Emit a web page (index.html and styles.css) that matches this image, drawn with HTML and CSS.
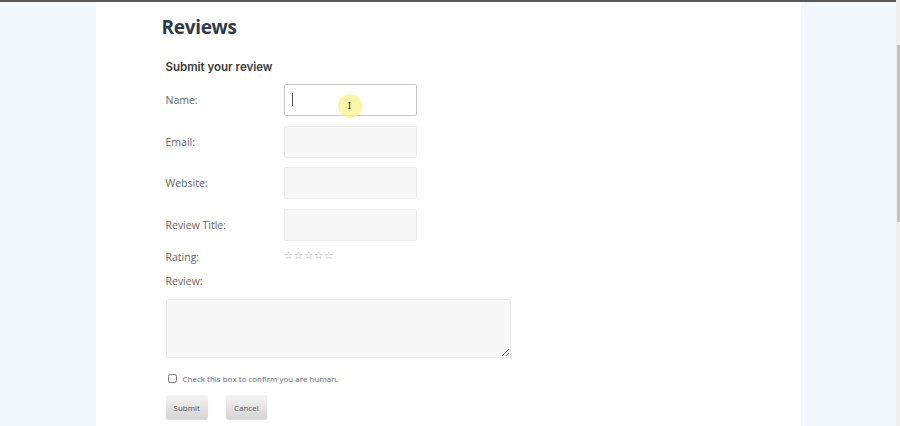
FILE: index.html
```html
<!DOCTYPE html>
<html lang="en">
<head>
    <meta charset="UTF-8">
    <meta name="viewport" content="width=device-width, initial-scale=1.0">
    <title>Reviews</title>
    <link rel="stylesheet" href="styles.css">
</head>
<body>
    <div class="window">
        <div class="page">
            <div class="column">
                <h1>Reviews</h1>
                <form class="review-form">
                    <h2>Submit your review</h2>
                    <div class="field-row">
                        <label for="name">Name:</label>
                        <div class="input-wrap">
                            <input type="text" id="name" class="focused">
                            <span class="caret"></span>
                            <span class="pointer">I</span>
                        </div>
                    </div>
                    <div class="field-row">
                        <label for="email">Email:</label>
                        <input type="text" id="email">
                    </div>
                    <div class="field-row">
                        <label for="website">Website:</label>
                        <input type="text" id="website">
                    </div>
                    <div class="field-row">
                        <label for="title">Review Title:</label>
                        <input type="text" id="title">
                    </div>
                    <div class="rating-row">
                        <label>Rating:</label>
                        <span class="stars">&#9734;&#9734;&#9734;&#9734;&#9734;</span>
                    </div>
                    <label for="review" class="review-label">Review:</label>
                    <textarea id="review"></textarea>
                    <div class="check-row">
                        <input type="checkbox" id="human">
                        <label for="human">Check this box to confirm you are human.</label>
                    </div>
                    <div class="buttons">
                        <button type="button">Submit</button>
                        <button type="button">Cancel</button>
                    </div>
                </form>
            </div>
        </div>
        <div class="scrollbar"><div class="thumb"></div></div>
    </div>
</body>
</html>
```

FILE: styles.css
```css
:root {
    --page-bg: #f3f7fe;
    --heading: #2f3a4b;
    --label: #666666;
    --field-bg: #f7f7f7;
    --field-border: #ececec;
}

body {
    margin: 0;
    padding: 0;
    font-family: "Open Sans", Arial, sans-serif;
    background-color: var(--page-bg);
    overflow: hidden;
}

.window {
    display: flex;
    height: 426px;
}

.page {
    flex: 1;
    border-top: 2px solid #5a5a5a;
    box-sizing: border-box;
}

.column {
    width: 705px;
    height: 100%;
    margin: 0 auto;
    background-color: #ffffff;
    padding: 12px 0 0 66px;
    box-sizing: border-box;
}

h1 {
    margin: 0;
    font-family: "Open Sans", Arial, sans-serif;
    font-size: 19px;
    font-weight: 700;
    color: var(--heading);
    letter-spacing: -0.3px;
}

.review-form {
    padding-left: 4px;
}

h2 {
    margin: 20px 0 10px;
    font-family: Inter, "Open Sans", sans-serif;
    font-size: 11.5px;
    font-weight: 600;
    color: #3a3a3a;
}

label {
    font-size: 10.5px;
    color: var(--label);
}

.field-row {
    display: flex;
    align-items: center;
    height: 32px;
    margin-bottom: 9.5px;
}

.field-row label {
    width: 118px;
}

input[type="text"] {
    width: 133px;
    height: 32px;
    box-sizing: border-box;
    border: 1px solid var(--field-border);
    background-color: var(--field-bg);
    border-radius: 2px;
    margin: 0;
    outline: none;
}

input.focused {
    background-color: #ffffff;
    border-color: #c9c9c9;
}

.input-wrap {
    position: relative;
}

.caret {
    position: absolute;
    left: 8px;
    top: 9px;
    width: 1px;
    height: 13px;
    background-color: #555555;
}

.pointer {
    position: absolute;
    left: 54px;
    top: 10px;
    width: 24px;
    height: 24px;
    border-radius: 50%;
    background-color: rgba(250, 240, 110, 0.6);
    font-family: "DejaVu Serif", serif;
    font-size: 10px;
    color: #444444;
    text-align: center;
    line-height: 24px;
}

.rating-row {
    display: flex;
    align-items: center;
    margin-top: -4px;
    height: 18px;
}

.rating-row label {
    width: 118px;
    padding-top: 3px;
}

.stars {
    font-family: "DejaVu Sans", sans-serif;
    font-size: 11px;
    color: #b5b5b5;
    letter-spacing: 0.2px;
    margin-top: 0;
}

.review-label {
    display: block;
    margin-top: 10px;
}

textarea {
    display: block;
    width: 345px;
    height: 59px;
    margin-top: 11px;
    box-sizing: border-box;
    border: 1px solid var(--field-border);
    background-color: var(--field-bg);
    border-radius: 2px;
}

.check-row {
    display: flex;
    align-items: center;
    margin-top: 15px;
    padding-left: 2px;
}

.check-row input {
    width: 9px;
    height: 9px;
    margin: 0 6px 0 0;
}

.check-row label {
    font-size: 8px;
    color: #666666;
}

.buttons {
    display: flex;
    gap: 18px;
    margin-top: 11px;
}

button {
    height: 24px;
    padding: 0 8px;
    font-family: "Open Sans", Arial, sans-serif;
    font-size: 8px;
    color: #555555;
    border: none;
    border-radius: 2px;
    background: linear-gradient(#f4f4f4, #d4d4d4);
    box-shadow: 0 1px 1px rgba(0, 0, 0, 0.15);
}

.scrollbar {
    width: 4px;
    background-color: #eeeeee;
}

.thumb {
    margin-top: 45px;
    height: 177px;
    width: 3px;
    margin-left: 1px;
    background-color: #c1c1c1;
}
```
